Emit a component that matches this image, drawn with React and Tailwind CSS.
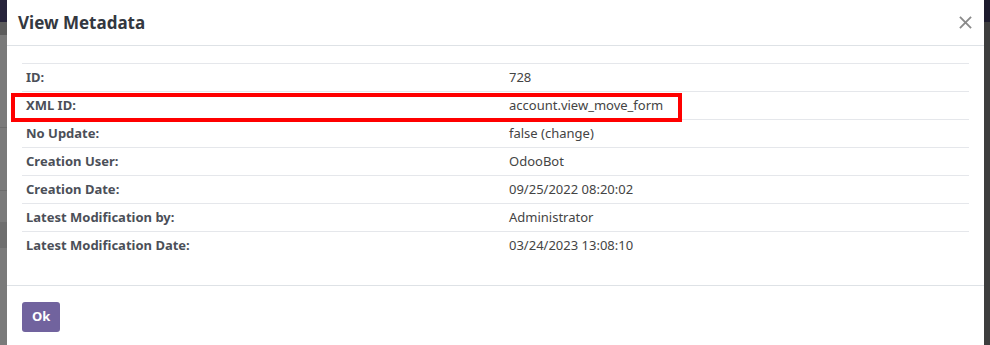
const rows = [
  ["ID:", "728"],
  ["XML ID:", "account.view_move_form"],
  ["No Update:", "false (change)"],
  ["Creation User:", "OdooBot"],
  ["Creation Date:", "09/25/2022 08:20:02"],
  ["Latest Modification by:", "Administrator"],
  ["Latest Modification Date:", "03/24/2023 13:08:10"],
];

export default function App() {
  return (
    <div className="flex h-[345px] w-[990px] overflow-hidden font-['Noto_Sans',sans-serif]">
      {/* backdrop, left */}
      <div className="flex w-[7px] flex-col bg-[#7a7a7a]">
        <div className="h-[22px] bg-[#26233a]" />
        <div className="h-[13px] bg-[#5c5c5c]" />
        <div className="h-[92px]" />
        <div className="h-px bg-[#6c6c6c]" />
        <div className="h-[62px]" />
        <div className="h-px bg-[#6c6c6c]" />
        <div className="h-[31px]" />
        <div className="h-[26px] bg-[#6e6e6e]" />
      </div>

      {/* modal */}
      <div className="relative flex flex-1 flex-col bg-white">
        <div className="flex h-[46px] items-center justify-between border-b border-[#dee2e6] pl-[11px] pr-[12px]">
          <h4 className="text-[17px] font-bold text-[#333840]">View Metadata</h4>
          <svg className="h-[13px] w-[13px]" viewBox="0 0 14 14" fill="none" stroke="#8a8a8a" strokeWidth="2">
            <path d="M1 1 L13 13 M13 1 L1 13" />
          </svg>
        </div>

        <div className="flex-1 px-[15px] pt-[17px]">
          <table className="w-full border-collapse text-[13px] text-[#444]">
            <tbody>
              {rows.map(([k, v], i) => (
                <tr key={k} className={i < rows.length - 1 ? "border-t border-b border-[#e5e7eb]" : "border-t border-[#e5e7eb]"}>
                  <td className="h-[28px] w-[487px] pl-[4px] font-bold text-[#4b4f58]">{k}</td>
                  <td className="h-[28px]">{v}</td>
                </tr>
              ))}
            </tbody>
          </table>
        </div>

        <div className="flex h-[60px] items-center border-t border-[#dee2e6] px-[15px] pt-[2px]">
          <button className="h-[30px] rounded-[3px] bg-[#71639e] px-[10px] text-[13px] font-bold text-white">Ok</button>
        </div>

        {/* annotation */}
        <div className="pointer-events-none absolute left-[4px] top-[93px] h-[29px] w-[671px] border-4 border-[#ff0000]" />
      </div>

      {/* backdrop, right */}
      <div className="flex w-[6px] flex-col bg-[#3d3d3d]">
        <div className="h-[22px] bg-[#1e1c2e]" />
      </div>
    </div>
  );
}
